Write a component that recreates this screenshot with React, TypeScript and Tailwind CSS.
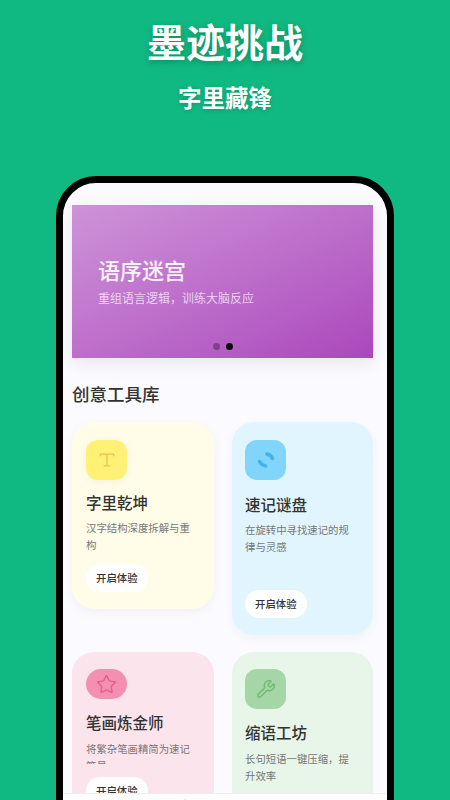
import { Star, Wrench, House, Compass, Bookmark, User } from 'lucide-react';

const FONT = "font-['Noto_Sans_CJK_SC','Noto_Sans',sans-serif]";

const NAV_ICONS = [House, Compass, Bookmark, User];

export default function App() {
  return (
    <div className={`h-[800px] w-[450px] overflow-hidden bg-[#10b981] ${FONT}`}>
      {/* Heading */}
      <div className="flex flex-col items-center pt-[14px]">
        <h1 className="text-[39px] leading-[52px] font-bold text-white [text-shadow:0_2px_6px_rgba(0,0,0,0.25)]">墨迹挑战</h1>
        <p className="mt-[16px] text-[23.5px] leading-[30px] font-bold text-white [text-shadow:0_1px_4px_rgba(0,0,0,0.2)]">字里藏锋</p>
      </div>

      {/* Phone frame */}
      <div className="relative mx-[56px] mt-[64px] h-[700px] overflow-hidden rounded-[40px] border-[7px] border-black bg-[#fafaff]">
        <div className="pl-[9px] pr-[14px] pt-[22px]">
          {/* Banner */}
          <div className="relative h-[153px] bg-gradient-to-br from-[#ce93d8] to-[#ab47bc] pl-[26px] pt-[48px] shadow-[0_6px_16px_rgba(0,0,0,0.08)]">
            <h2 className="text-[22px] leading-[32px] font-medium text-white/90">语序迷宫</h2>
            <p className="mt-[3px] text-[12px] leading-[20px] text-white/70">{'重组语言逻辑\uFF0C训练大脑反应'}</p>
            <div className="absolute bottom-[8px] left-0 right-0 flex justify-center gap-[6px]">
              <span className="h-[7px] w-[7px] rounded-full bg-black/30" />
              <span className="h-[7px] w-[7px] rounded-full bg-black/90" />
            </div>
          </div>

          <h3 className="mt-[23px] text-[17.5px] leading-[26px] font-medium text-[#333]">创意工具库</h3>

          {/* Tool cards */}
          <div className="mt-[15px] grid grid-cols-[142px_141px] items-start gap-x-[18px] gap-y-[17px]">
            <div className="h-[187px] rounded-[22px] bg-[#fffde7] px-[14px] pt-[18px] shadow-[0_4px_12px_rgba(0,0,0,0.04)]">
              <div className="flex h-[40px] w-[41px] items-center justify-center rounded-[12px] bg-[#fff176] shadow-[0_2px_8px_rgba(0,0,0,0.05)]">
                <svg viewBox="0 0 24 24" className="h-[20px] w-[20px]" fill="none" stroke="#e8c452" strokeWidth="1.6" strokeLinecap="round" strokeLinejoin="round">
                  <path d="M4 7V5h16v2" />
                  <path d="M12 5v14" />
                  <path d="M8.5 19h7" />
                </svg>
              </div>
              <h4 className="mt-[11px] text-[15.5px] leading-[22px] font-medium text-[#333]">字里乾坤</h4>
              <p className="mt-[6px] text-[10.4px] leading-[17px] text-[#777]">汉字结构深度拆解与重构</p>
              <button className="mt-[11px] h-[28px] rounded-[14px] bg-white px-[10px] text-[10.4px] font-medium text-[#333]">开启体验</button>
            </div>

            <div className="h-[213px] rounded-[22px] bg-[#e1f5fe] pl-[13px] pr-[14px] pt-[18px] shadow-[0_4px_12px_rgba(0,0,0,0.04)]">
              <div className="flex h-[40px] w-[41px] items-center justify-center rounded-[12px] bg-[#81d4fa]">
                <svg viewBox="0 0 20 20" className="h-[20px] w-[20px]" fill="none" stroke="#3fb3ea" strokeWidth="3.5" strokeLinecap="round">
                  <path d="M11 4Q15 5 16.5 8.5" />
                  <path d="M3.5 11.5Q5.5 15 9.5 16" />
                </svg>
              </div>
              <h4 className="mt-[13px] text-[15.5px] leading-[22px] font-medium text-[#333]">速记谜盘</h4>
              <p className="mt-[6px] text-[10.4px] leading-[17px] text-[#777]">在旋转中寻找速记的规律与灵感</p>
              <button className="mt-[35px] h-[28px] rounded-[14px] bg-white px-[10px] text-[10.4px] font-medium text-[#333]">开启体验</button>
            </div>

            <div className="h-[220px] rounded-[22px] bg-[#fce4ec] px-[14px] pt-[17px]">
              <div className="flex h-[30px] w-[41px] items-center justify-center rounded-[15px] bg-[#f48fb1]">
                <Star className="h-[21px] w-[21px] text-[#e35f8d]" strokeWidth={1.6} />
              </div>
              <h4 className="mt-[12px] text-[15.5px] leading-[22px] font-medium text-[#333]">笔画炼金师</h4>
              <p className="mt-[7px] h-[24px] overflow-hidden text-[10.4px] leading-[17px] text-[#777]">将繁杂笔画精简为速记符号</p>
              <button className="mt-[13px] h-[28px] rounded-[14px] bg-white px-[10px] text-[10.4px] font-medium text-[#333]">开启体验</button>
            </div>

            <div className="h-[220px] rounded-[22px] bg-[#e8f5e9] pl-[13px] pr-[14px] pt-[17px]">
              <div className="flex h-[40px] w-[41px] items-center justify-center rounded-[12px] bg-[#a5d6a7]">
                <Wrench className="h-[20px] w-[20px] text-[#6cbb70]" strokeWidth={1.6} />
              </div>
              <h4 className="mt-[12px] text-[15.5px] leading-[22px] font-medium text-[#333]">缩语工坊</h4>
              <p className="mt-[7px] text-[10.4px] leading-[17px] text-[#777]">{'长句短语一键压缩\uFF0C提升效率'}</p>
            </div>
          </div>
        </div>

        {/* Bottom nav, only its top edge is in the picture */}
        <div className="absolute left-0 right-0 top-[610px] flex h-[60px] justify-around border-t border-[#eeeeee] bg-white pt-[5px]">
          {NAV_ICONS.map((Icon, i) => (
            <Icon key={i} className="h-[20px] w-[20px] text-[#9ca3af] first:mt-[4px]" />
          ))}
        </div>
      </div>
    </div>
  );
}
